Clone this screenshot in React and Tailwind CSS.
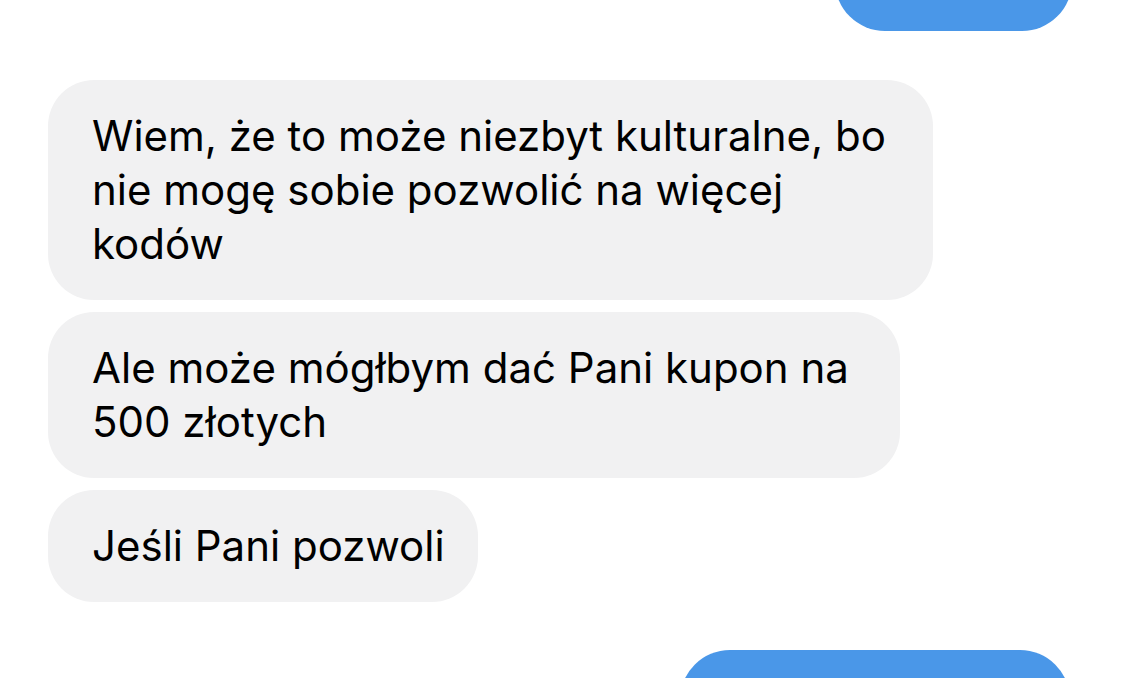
import React from 'react'

const Incoming = ({ lines, width }) => (
  <div
    className={`self-start shrink-0 ml-[48px] rounded-[46px] bg-[#f1f1f2] pl-[44px] py-[29px] text-[42px] leading-[54px] text-black whitespace-nowrap ${width}`}
  >
    {lines.map((l, i) => (
      <div key={i}>{l}</div>
    ))}
  </div>
)

export default function App() {
  return (
    <div
      className="w-[1125px] h-[678px] overflow-hidden bg-white flex flex-col"
      style={{ fontFamily: 'Inter, "Noto Sans", sans-serif' }}
    >
      <div className="self-end shrink-0 mr-[53px] -mt-[79px] w-[237px] h-[110px] rounded-[50px] bg-[#4a97e8]" />

      <div className="mt-[49px] shrink-0 flex flex-col gap-[12px]">
        <Incoming
          width="w-[885px]"
          lines={[
            'Wiem, że to może niezbyt kulturalne, bo',
            'nie mogę sobie pozwolić na więcej',
            'kodów',
          ]}
        />
        <Incoming width="w-[852px]" lines={['Ale może mógłbym dać Pani kupon na', '500 złotych']} />
        <Incoming width="w-[430px]" lines={['Jeśli Pani pozwoli']} />
      </div>

      <div className="self-end shrink-0 mr-[55px] mt-[48px] w-[390px] h-[110px] rounded-[50px] bg-[#4a97e8]" />
    </div>
  )
}
